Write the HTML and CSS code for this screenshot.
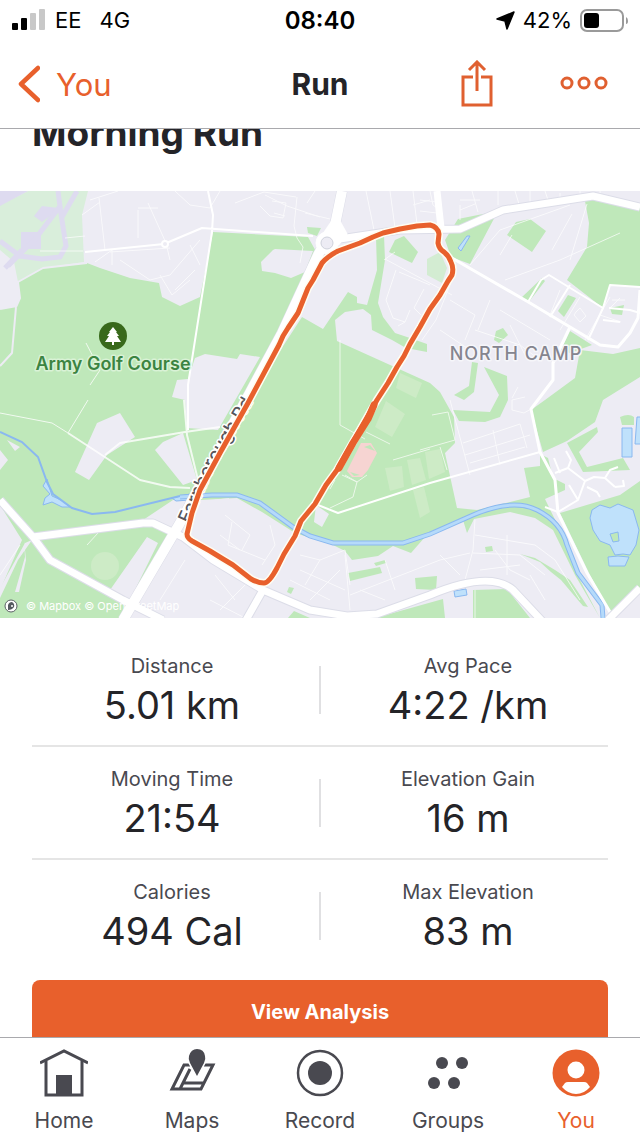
FILE: index.html
```html
<!DOCTYPE html>
<html lang="en">
<head>
    <meta charset="UTF-8">
    <meta name="viewport" content="width=device-width, initial-scale=1.0">
    <title>Run</title>
    <link rel="stylesheet" href="styles.css">
</head>
<body>
    <header class="top">
        <div class="status">
            <div class="status-left">
                <svg width="33" height="22" viewBox="0 0 33 22">
                    <rect x="0" y="14" width="6" height="7" rx="1"/>
                    <rect x="9" y="9" width="6" height="12" rx="1"/>
                    <rect x="18" y="4" width="6" height="17" rx="1" fill="#c8c8c8"/>
                    <rect x="27" y="0" width="6" height="21" rx="1" fill="#c8c8c8"/>
                </svg>
                <span>EE</span>
                <span class="network">4G</span>
            </div>
            <span class="clock">08:40</span>
            <div class="status-right">
                <svg width="19" height="19" viewBox="0 0 19 19"><path d="M18 1 11 18 9 10 1 8Z" stroke="#000" stroke-width="1.5" stroke-linejoin="round"/></svg>
                <span>42%</span>
                <svg width="48" height="23" viewBox="0 0 48 23">
                    <rect x="1" y="1" width="42" height="21" rx="6" fill="none" stroke="#9a9a9a" stroke-width="2"/>
                    <rect x="4" y="4" width="15" height="15" rx="3"/>
                    <path d="M46 8q2 1 2 4t-2 3z" fill="#9a9a9a"/>
                </svg>
            </div>
        </div>
        <nav class="nav">
            <a class="back" href="#you">
                <svg width="22" height="38" viewBox="0 0 22 38"><path d="M20 3 3 19 20 35" fill="none" stroke="#e8602c" stroke-width="4.5" stroke-linecap="round" stroke-linejoin="round"/></svg>
                You
            </a>
            <h2>Run</h2>
            <div class="actions">
                <button aria-label="Share">
                    <svg width="32" height="48" viewBox="0 0 32 48" fill="none" stroke="#e06030" stroke-width="3">
                        <path d="M12 17H2V45H30V17H20M16 31V2M8 10 16 2 24 10"/>
                    </svg>
                </button>
                <button aria-label="More">
                    <svg width="48" height="16" viewBox="0 0 48 16" fill="none" stroke="#e06030" stroke-width="3">
                        <circle cx="7" cy="7" r="5"/><circle cx="24" cy="7" r="5"/><circle cx="41" cy="7" r="5"/>
                    </svg>
                </button>
            </div>
        </nav>
    </header>

    <main>
        <h1>Morning Run</h1>

        <svg class="map" viewBox="0 191 640 427" preserveAspectRatio="xMidYMid slice">
            <rect y="191" width="640" height="427" fill="#edecf4"/>

            <!-- airfield -->
            <path d="M0 205 28 191H88L82 215 84 262 43 268 18 282 0 255Z" fill="#d9eedb"/>
            <path d="M0 191H28L0 206ZM34 216 42 206 58 208 50 216 42 222ZM21 232H41V249H21Z" fill="#dedbf0"/>
            <path d="M0 250 14 262 18 282 0 290Z" fill="#edecf4"/>
            <g class="runway">
                <path d="M0 241 20 256 42 259 60 257 66 246 61 214 58 191M61 205 36 238 8 266M77 191 62 217M22 250 5 268"/>
            </g>

            <!-- parks -->
            <g class="park">
                <path d="M0 309 17 306 20 298 18 282 43 268 87 263 100 268 130 278 159 283 162 297 180 306 200 297 213 232 308 237 318 255 175 540 125 618H0V590L22 540 0 505Z"/>
                <path d="M302 317 323 329 348 292 357 297V303L367 305 377 270 376 237 384 235 385 260 378 303 383 317 395 333 407 337 427 344V352L406 348 392 340 372 330 371 315 363 309 345 312 335 320 337 341 430 383 440 392 454 417 455 443 445 453 457 508 477 510 530 497 524 468 540 466V454L548 458 553 478 565 484V490L545 499 560 530 580 580 600 618 575 575 553 530 535 518 510 512 474 519 467 533 463 520 425 537 411 553 393 546 378 556 352 560 345 551 333 545 295 533 262 512 237 498 200 500 235 420Z"/>
                <path d="M458 219 498 211 470 264 451 257 445 240ZM516 222 530 219 546 231 532 252 507 235ZM395 240 404 236 418 252 412 263 389 252ZM307 227 321 228 317 236 308 233Z"/>
                <path d="M585 201 610 196 640 208V287L610 285 603 308 567 280 587 247 589 223Z"/>
                <path d="M521 298 542 278 545 281 528 303ZM568 295 576 298 564 317 558 311ZM610 308 624 305 622 315 612 314ZM570 331 592 345 570 353 561 350Z"/>
                <path d="M640 348 613 354 580 350 575 378 545 400 531 410 543 452 567 441 595 422 603 400 640 377ZM567 443 597 427 598 432 579 452 587 467 623 458 630 470 583 472Z"/>
                <path d="M560 513 620 495 640 481V590L613 618 590 575Z"/>
                <path d="M472 362 478 363 474 392 464 400 454 395 469 386ZM484 367 507 376 508 400 500 417 485 422 459 421 453 410 490 412 499 395ZM496 331 503 328 508 335 499 343 494 340Z"/>
                <path d="M620 417q9-4 14 0v8h-12zM485 547l7-1 1 5-7 1ZM348 573 380 567 382 573 350 581ZM374 563 385 560 386 563 376 566ZM415 578 437 576 436 590 416 589ZM289 587 294 588 291 594 287 592Z"/>
                <path d="M375 618 443 599 445 618ZM473 590 507 589 530 618H473ZM520 554 535 558 555 570 570 580 588 607 583 606 561 580 551 572 540 562ZM288 618 294 611 310 618Z"/>
            </g>
            <path d="M427 259 440 252 447 268 442 283 427 275Z" fill="#d3ecd2"/>
            <g class="pitch">
                <path d="M386 401 405 414 392 437 375 427ZM385 468 402 466 404 487 390 491ZM407 460 420 458 426 480 412 485ZM400 373 422 383 416 398 396 388ZM425 452 440 449 445 472 429 479ZM413 490 424 487 430 512 420 518Z"/>
                <circle cx="105" cy="566" r="14"/>
            </g>

            <!-- built-up blocks inside the parks -->
            <g class="block">
                <path d="M97 423 120 413 135 437 107 455 89 480 75 472ZM155 450 163 442 183 433 197 480 183 485ZM0 450 8 460 0 470ZM7 440 20 447 15 451ZM143 520 173 500 195 498 170 534ZM147 537 158 543 130 600 110 590Z"/>
                <path d="M177 380 188 379 195 358 205 354 237 359 240 354 260 357 218 430 187 428 185 400 172 397Z"/>
                <path d="M261 262 273 250 275 249 313 251 305 272 291 278 275 273 262 271ZM316 505 329 514 322 527 314 522ZM205 501 229 498 229 502 210 507Z"/>
            </g>
            <path d="M32 540 25 543 0 588V598L18 560ZM24 540 25 557 15 592 19 592 26 560Z" fill="#edecf4"/>

            <!-- water -->
            <g class="water">
                <path d="M592 510 600 505 610 508 618 504 633 510 639 530 636 545 630 555 623 554 615 555 610 545 600 541 593 530 590 518ZM608 557 618 556 629 557 625 566 609 566ZM622 428H632V457H622ZM637 417H642V444H635ZM458 248 467 236 470 236 461 251ZM454 591 466 589 467 595 455 597Z"/>
                <path d="M610 534 618 532 619 541 613 542Z" fill="#bfe8ba"/>
                <path d="M47 479 52 496 61 500 70 507 62 507 52 502 43 505 45 498 50 494 43 486ZM172 498 190 494V500L176 501Z"/>
            </g>
            <path class="stream-edge" d="M0 432 22 442 38 457 47 482 53 494 72 508 92 514 115 512 180 496"/>
            <path class="river-edge" d="M180 497 212 495 237 495 260 503 293 527 310 536 333 543H403L430 534 473 515Q513 498 537 510T567 545L578 573 602 605 603 618"/>
            <path class="river" d="M180 497 212 495 237 495 260 503 293 527 310 536 333 543H403L430 534 473 515Q513 498 537 510T567 545L578 573 602 605 603 618"/>

            <!-- running track -->
            <path d="M361 443 371 443 377 453 368 470 362 477 352 477 347 471Z" fill="#f6d4d2"/>
            <path d="M364 447 370 445 375 451ZM350 472 354 476 360 475Z" fill="#bfe8ba"/>

            <!-- small streets -->
            <g class="lane">
                <path d="M99 198 105 250M83 251H40M148 203 166 243 170 260M138 210V238M138 208H158M90 200 118 191M95 262 112 250 112 265M82 215 100 202M65 238 85 236M110 252 170 248M120 260 150 280 170 275 200 240M160 275 172 295 190 280M175 290 195 270M190 245 200 265"/>
                <path d="M235 203 264 192 296 197M260 206 270 216 283 218 286 203 272 201M274 213 285 216M297 197 294 226 297 238 303 247 300 263M265 195 287 206 320 217M305 213 330 219M315 191 307 203"/>
                <path d="M366 191 374 230M390 191 395 228M413 191 417 224M413 205 430 200M430 191 433 205 440 210M384 260 395 252M385 259 452 295M396 270 386 300 393 318 405 322M399 272 430 285M424 289 414 308 421 315M410 310 405 322 398 326"/>
                <path d="M460 205V220M472 191 478 212M460 200H480M498 191V205M515 191 519 204M530 191V202M545 191 548 200M560 193V200M580 191V198M460 210 475 204M600 191V196M420 200 437 202M420 211 437 213"/>
                <path d="M470 265 500 230 570 205M505 280 560 260 620 233M570 260 587 204M500 255 512 235M552 250 572 214M454 275 436 320 422 340M450 300 475 315 465 340M490 300 478 330M475 330 520 345 540 360M500 310 550 340M510 325 525 355M440 330 470 350"/>
                <path d="M525 397 512 400 512 410 524 413 531 409M518 387 512 398M450 400 462 445 470 475M432 415 448 412 455 440 420 450M463 443 520 424 527 448M493 430 500 465M470 463 525 447M465 455 530 435M440 447 447 470M340 340V425L365 439"/>
                <path d="M366 432 390 444M393 460 430 449M342 475 357 482 353 497 330 508M357 482 367 475M357 482 345 475M335 480 330 489"/>
                <path d="M560 290 550 315M580 297 560 330M610 297 585 340M600 315 621 322M620 298 610 308M612 300H625M576 312 580 308 586 316 580 322 574 315Z"/>
                <path d="M225 515 250 535 242 550M232 522 228 545 265 560M270 525 275 545 262 565M300 555 320 560 305 585M300 570 345 590M290 580 330 600M320 560 345 550 350 585M345 555 350 610M385 560 395 590M350 595 440 560 470 553M360 590 385 600M310 600 340 570"/>
                <path d="M475 520 473 550 465 580M473 553 520 555 545 575M507 535V575M475 535 535 545 555 560M495 550 510 570 530 580M440 555 460 575M480 570 520 565M475 590V618M530 575 545 600M555 560 580 600"/>
                <path d="M190 540 240 570M220 535 240 550M185 560 160 600M0 575 20 545M215 575 235 600M250 580 220 610M87 545 98 533M210 600 245 618M175 191 190 205 210 208 220 191"/>
            </g>
            <g class="path">
                <path d="M0 413 52 423 68 433M88 400 68 433M86 343 100 370 90 385" stroke-width="1"/>
                <path d="M68 433 140 480 170 487 190 488M105 455 120 443 185 432 220 427M184 400 187 435 198 480"/>
            </g>

            <!-- roads -->
            <g class="road minor">
                <path d="M18 282 43 268 87 263M18 282 20 298 16 307 12 353 0 366M0 309 17 306" stroke="#edecf4"/>
                <path d="M85 252 164 244 202 228 313 236M208 191 213 215 212 232 188 385V430M318 505 338 513 430 483 540 452M555 473 568 468 585 481 594 477 605 478 615 487M585 481 578 500 558 512 545 507M605 478 610 470 618 467M615 487 624 486 623 480M568 468 571 460 566 451M560 473 554 458M578 500 569 485M587 487 597 492 600 497"/>
                <path d="M528 302 541 280 549 275 603 308 610 285 640 287M570 285 550 317M603 308 588 340M640 313 630 310 609 308M603 320 620 322" stroke-width="2"/>
            </g>
            <g class="road mid">
                <path d="M452 258 530 303 570 327 600 345 618 347 630 333 638 318 640 290M570 327 553 363V380L531 409 540 452 555 480 558 513 587 573 613 617"/>
            </g>
            <g class="casing">
                <path d="M342 191 335 225 318 255 282 333 180 523 123 620" stroke-width="11"/>
                <path d="M333 240 400 230 460 229 503 210 593 196 640 207M0 500 33 537 50 560 123 600 163 620M33 537 143 523H153L183 537 213 560 263 590 310 610 347 616 377 614 430 595Q490 570 513 590L543 622M263 590 246 620M640 588 608 620"/>
            </g>
            <g class="road big">
                <path d="M342 191 335 225 318 255 282 333 180 523 123 620" stroke-width="10"/>
                <path d="M333 240 400 230 460 229 503 210 593 196 640 207M437 191 441 228M640 588 608 620M263 590 246 620" stroke-width="7"/>
                <path d="M0 500 33 537 50 560 123 600 163 620M33 537 143 523H153L183 537 213 560 263 590 310 610 347 616 377 614 430 595Q490 570 513 590L543 622" stroke-width="7"/>
                <circle cx="327" cy="243" r="11" fill="#fff"/>
                <path d="M336 216 346 234 338 244 320 240Z" stroke-width="3" fill="#fff"/>
            </g>
            <circle cx="327" cy="243" r="6" fill="#edecf4" stroke="#cfd2dc"/>
            <circle cx="165" cy="244" r="3" fill="#edecf4" stroke="#fff" stroke-width="2"/>

            <path id="rd" d="M189 524 216 464 260 390" fill="none"/>
            <text class="road-name"><textPath href="#rd">Farnborough Rd</textPath></text>

            <!-- recorded route -->
            <path class="route" d="M417 226 430 225Q438 227 439 234L438 243Q439 249 444 252 449 256 451 262 454 268 452 275L448 281 440 295 430 309 420 327 410 344 404 356 397 367 388 383 377 400 337 470 326 485 315 504 301 521 295 536 284 554 277 568Q269 583 264 583 258 583 251 579L233 565 223 559 210 551 192 541Q187 538 187 534L192 513 200 490 220 453 248 403 279 345 283 336 288 328 298 313 302 303 308 288 313 280 322 263Q328 256 338 251L360 243 373 237 383 233 400 229Z"/>
            <path class="route-line" d="M417 226 430 225Q438 227 439 234L438 243Q439 249 444 252 449 256 451 262 454 268 452 275L448 281 440 295 430 309 420 327 410 344 404 356 397 367 388 383 377 400 337 470 326 485 315 504 301 521 295 536 284 554 277 568Q269 583 264 583 258 583 251 579L233 565 223 559 210 551 192 541Q187 538 187 534L192 513 200 490 220 453 248 403 279 345 283 336 288 328 298 313 302 303 308 288 313 280 322 263Q328 256 338 251L360 243 373 237 383 233 400 229Z"/>
            <path d="M374 405 368 419 353 443 339 468" fill="none" stroke="#e8602c" stroke-width="7" stroke-linecap="round" stroke-linejoin="round"/>

            <!-- places -->
            <circle cx="113" cy="336" r="14" fill="#38691b"/>
            <path d="M113 327 117 332H116L119 336H117L121 342H114V345H112V342H105L109 336H107L110 332H109Z" fill="#fff"/>
            <text class="place" x="113" y="370">Army Golf Course</text>
            <text class="district" x="516" y="360">NORTH CAMP</text>
            <circle cx="11" cy="606" r="6" fill="#fff" stroke="#5b6065" stroke-width="1"/>
            <path d="M8 610 8 605Q9 602 12 602 15 604 14 607 12 610 8 610Z" fill="#555a60"/><circle cx="12" cy="606" r="1" fill="#fff"/>
            <text class="credit" x="26" y="610">© Mapbox © OpenStreetMap</text>
        </svg>

        <dl class="stats">
            <div><dt>Distance</dt><dd>5.01 km</dd></div>
            <div><dt>Avg Pace</dt><dd>4:22 /km</dd></div>
            <div><dt>Moving Time</dt><dd>21:54</dd></div>
            <div><dt>Elevation Gain</dt><dd>16 m</dd></div>
            <div><dt>Calories</dt><dd>494 Cal</dd></div>
            <div><dt>Max Elevation</dt><dd>83 m</dd></div>
        </dl>

        <button class="analysis">View Analysis</button>
    </main>

    <nav class="tabs">
        <a href="#home">
            <svg width="48" height="48" viewBox="0 0 48 48" fill="none" stroke="#494950" stroke-width="3">
                <path d="M0 14 24 2 48 14" /><path d="M6 12V46H42V12"/><path d="M16 26H32V46H16Z" fill="#494950" stroke="none"/>
            </svg>
            Home
        </a>
        <a href="#maps">
            <svg width="48" height="48" viewBox="0 0 48 48" fill="none" stroke="#494950" stroke-width="3">
                <path d="M22 16H16L4 40H33L45 16H36M12 40 22 20M16 34H36"/>
                <path d="M29 27 22 14Q20 10 21 7 23 0 29 0 36 0 37 7 38 10 36 14Z" fill="#494950" stroke="#fff" stroke-width="3" paint-order="stroke"/>
            </svg>
            Maps
        </a>
        <a href="#record">
            <svg width="48" height="48" viewBox="0 0 48 48"><circle cx="24" cy="24" r="22" fill="none" stroke="#494950" stroke-width="2.5"/><circle cx="24" cy="24" r="12" fill="#494950"/></svg>
            Record
        </a>
        <a href="#groups">
            <svg width="48" height="48" viewBox="0 0 48 48" fill="#494950"><circle cx="18" cy="14" r="6"/><circle cx="38" cy="14" r="6"/><circle cx="10" cy="34" r="6"/><circle cx="30" cy="34" r="6"/></svg>
            Groups
        </a>
        <a class="active" href="#you">
            <svg width="48" height="48" viewBox="0 0 48 48"><circle cx="24" cy="24" r="23.5" fill="#e8602c"/><circle cx="24" cy="21" r="8.5" fill="#fff"/><path d="M10 38 13 34Q14 33 16 33H32Q34 33 35 34L38 38Q32 45 24 45T10 38Z" fill="#fff"/></svg>
            You
        </a>
    </nav>
</body>
</html>
```
FILE: styles.css
```css
* {
    box-sizing: border-box;
}
body {
    margin: 0;
    height: 100vh;
    display: flex;
    flex-direction: column;
    overflow: hidden;
    background: #fff;
    color: #242428;
    font-family: Inter, "Liberation Sans", sans-serif;
}
a {
    color: inherit;
    text-decoration: none;
}
button {
    border: 0;
    padding: 0;
    background: none;
    font-family: inherit;
}
svg {
    display: block;
}

/* status bar and navigation */
.top {
    border-bottom: 1px solid #a9a9ad;
}
.status {
    display: grid;
    grid-template-columns: 1fr auto 1fr;
    align-items: center;
    height: 40px;
    padding: 0 12px;
    color: #000;
    font-size: 22px;
}
.status-left, .status-right {
    display: flex;
    align-items: center;
    gap: 8px;
}
.status-left {
    gap: 10px;
}
.status-right {
    justify-content: flex-end;
}
.network {
    margin-left: 8px;
}
.clock {
    font-size: 24px;
    font-weight: 600;
}
.nav {
    display: grid;
    grid-template-columns: 1fr auto 1fr;
    align-items: center;
    height: 88px;
    padding: 0 18px;
}
.back {
    display: flex;
    align-items: center;
    gap: 16px;
    color: #e8602c;
    font-size: 31px;
}
.nav h2 {
    margin: 0;
    font-size: 30px;
}
.actions {
    display: flex;
    justify-content: flex-end;
    align-items: center;
    gap: 67px;
    padding-right: 14px;
}

main {
    flex: 1;
    min-height: 0;
    overflow: hidden;
}
h1 {
    margin: -20px 32px 34px;
    font-size: 37px;
    line-height: 48px;
}

/* map */
.map {
    width: 100%;
    aspect-ratio: 640 / 427;
}
.runway {
    fill: none;
    stroke: #dedbf0;
    stroke-width: 5;
}
.park {
    fill: #bfe8ba;
}
.pitch {
    fill: #cdebc6;
}
.block {
    fill: #edecf4;
}
.water {
    fill: #bfe1fb;
    stroke: #8ab8f0;
    stroke-width: 1;
}
.stream-edge, .river-edge, .river {
    fill: none;
    stroke: #8ab8f0;
    stroke-width: 2;
}
.river-edge {
    stroke-width: 5;
}
.river {
    stroke: #b5dafa;
    stroke-width: 3;
}
.lane, .path, .road {
    fill: none;
    stroke: #fff;
    stroke-linejoin: round;
}
.lane {
    stroke-width: 1;
    opacity: 0.7;
}
.path {
    stroke-width: 2;
    opacity: 0.8;
}
.minor {
    stroke-width: 2;
}
.mid {
    stroke-width: 3;
}
.casing {
    fill: none;
    stroke: #dcdde8;
    stroke-width: 9;
    stroke-linejoin: round;
}
.route {
    fill: none;
    stroke: #fffdf2;
    stroke-width: 8;
    stroke-linejoin: round;
}
.route-line {
    fill: none;
    stroke: #e8602c;
    stroke-width: 5;
    stroke-linejoin: round;
}
.road-name, .place, .district {
    paint-order: stroke;
    stroke: #fff;
    stroke-width: 3;
    stroke-linejoin: round;
}
.road-name {
    fill: #55555c;
    font-size: 18px;
    font-weight: 500;
}
.place {
    fill: #3c8442;
    stroke: #d9f2d6;
    font-size: 18px;
    font-weight: 600;
    text-anchor: middle;
}
.district {
    fill: #85858f;
    stroke: #f6f6fa;
    font-size: 18px;
    font-weight: 500;
    letter-spacing: 1px;
    text-anchor: middle;
}
.credit {
    fill: #fff;
    font-size: 11px;
}

/* stats */
.stats {
    display: grid;
    grid-template-columns: 1fr 1fr;
    margin: 16px 32px 7px;
}
.stats div {
    position: relative;
    height: 113px;
    padding: 18px 8px 0 0;
    border-bottom: 2px solid #e5e5e5;
    text-align: center;
}
.stats div:nth-child(even) {
    padding: 18px 0 0 8px;
}
.stats div:nth-child(even)::before {
    content: "";
    position: absolute;
    left: -1px;
    top: 32px;
    width: 2px;
    height: 48px;
    background: #e0e0e2;
}
.stats div:nth-last-child(-n+2) {
    border-bottom: 0;
}
dt {
    color: #494950;
    font-size: 20px;
    line-height: 28px;
}
dd {
    margin: 3px 0 0;
    font-size: 38px;
    line-height: 44px;
}
.analysis {
    display: block;
    width: calc(100% - 64px);
    height: 80px;
    margin: 0 32px;
    padding-bottom: 16px;
    border-radius: 8px;
    background: #e8602c;
    color: #fff;
    font-size: 20px;
    font-weight: 700;
}

/* bottom tabs */
.tabs {
    display: grid;
    grid-template-columns: repeat(5, 1fr);
    height: 99px;
    padding-top: 11px;
    border-top: 1px solid #a9a9ad;
    background: #fff;
}
.tabs a {
    display: flex;
    flex-direction: column;
    align-items: center;
    gap: 10px;
    color: #494950;
    font-size: 21px;
    line-height: 28px;
}
.tabs .active {
    color: #e8602c;
}
```
